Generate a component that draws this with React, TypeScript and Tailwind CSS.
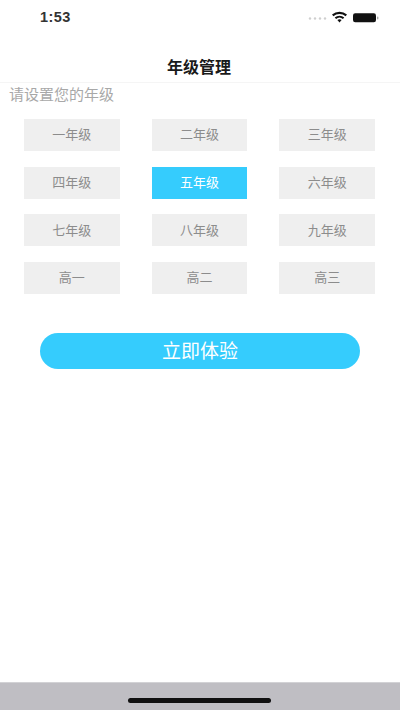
const cjk = "font-['Liberation_Sans','Noto_Sans_CJK_SC',sans-serif]";
const grades = ['一年级','二年级','三年级','四年级','五年级','六年级','七年级','八年级','九年级','高一','高二','高三'];

export default function App() {
  return (
    <div className={`w-[400px] h-[710px] bg-white flex flex-col overflow-hidden ${cjk}`}>
      <div className="h-[36px] flex items-center justify-between pl-[40px] pr-[15px] shrink-0">
        <span className="text-[14.5px] font-bold text-[#333] tracking-[0.4px] mb-[1px]">1:53</span>
        <div className="flex items-center mb-[2px]">
          <svg width="78" height="12" viewBox="0 0 78 12">
            <g fill="#cfcfcf">
              <circle cx="3" cy="7.5" r="1.2" /><circle cx="8" cy="7.5" r="1.2" /><circle cx="13" cy="7.5" r="1.2" /><circle cx="18" cy="7.5" r="1.2" />
            </g>
            <g transform="translate(1 0)" fill="#111">
              <path d="M24 3.6a11.5 11.5 0 0 1 15 0l-1.4 1.7a9 9 0 0 0-12.2 0z" />
              <path d="M26.7 6.5a7.5 7.5 0 0 1 9.6 0l-1.4 1.6a5 5 0 0 0-6.8 0z" />
              <path d="M29.4 9.1a3.4 3.4 0 0 1 4.2 0l-2.1 2.4z" />
            </g>
            <rect x="46" y="2.2" width="23" height="9" rx="2.2" fill="#111" />
            <rect x="70" y="5.4" width="1.4" height="3" rx="0.7" fill="#aaa" />
          </svg>
        </div>
      </div>
      <div className="h-[47px] flex items-center justify-center pt-[17px] border-b border-[#f5f5f5] shrink-0">
        <span className="text-[16px] font-bold text-[#1a1a1a] -ml-[2px]">年级管理</span>
      </div>
      <div className="pl-[9px] pt-[2px] h-[22px] flex items-center text-[15px] text-[#a8a8a8] shrink-0">请设置您的年级</div>
      <div className="grid grid-cols-3 gap-x-[32px] gap-y-[15.7px] pl-[24px] pr-[25px] pt-[14px] shrink-0">
        {grades.map((g) => (
          <div
            key={g}
            className={`h-[32px] flex items-center justify-center text-[13px] ${g === '五年级' ? 'bg-[#35ccfd] text-white' : 'bg-[#efefef] text-[#8c8c8c]'}`}
          >
            {g}
          </div>
        ))}
      </div>
      <div className="mx-[40px] mt-[39px] h-[36px] pt-[2px] rounded-full bg-[#35ccfd] text-white text-[19px] flex items-center justify-center shrink-0">
        立即体验
      </div>
      <div className="flex-1" />
      <div className="h-[28px] bg-[#bfbec3] border-t border-[#d2d2d5] flex justify-center shrink-0">
        <div className="w-[143px] h-[5px] rounded-full bg-[#111] mt-[15px] -ml-[1px]" />
      </div>
    </div>
  );
}
